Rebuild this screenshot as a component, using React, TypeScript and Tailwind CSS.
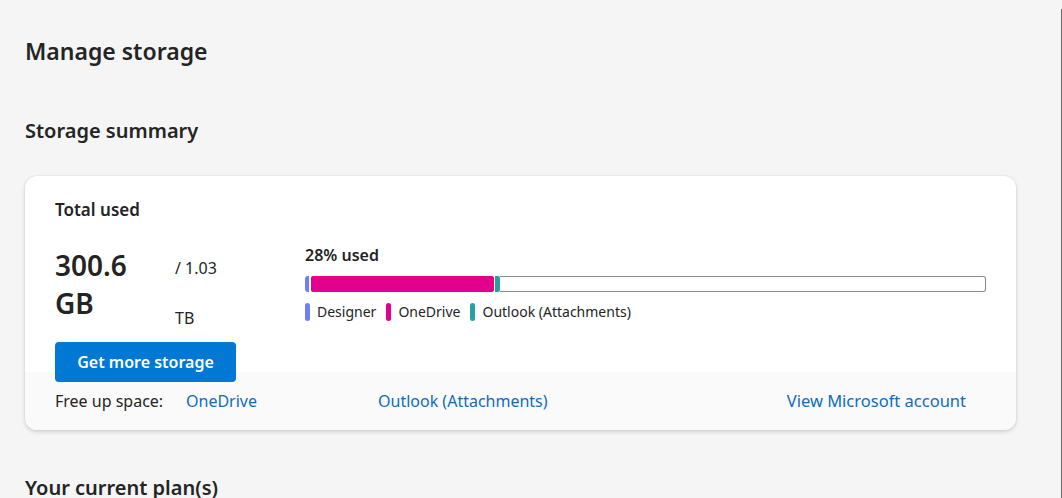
const SEGMENTS: { name: string; color: string }[] = [
  { name: "Designer", color: "bg-[#6f80f0]" },
  { name: "OneDrive", color: "bg-[#e3008c]" },
  { name: "Outlook (Attachments)", color: "bg-[#2b9fa0]" },
];

export default function App() {
  return (
    <div
      className="flex min-h-screen bg-[#f5f5f5] text-[#242424]"
      style={{ fontFamily: '"Segoe UI", "Noto Sans", sans-serif' }}
    >
      <main className="w-[1061px] pl-[25px] pr-[45px]">
        <h1 className="pt-[35px] text-[23px] leading-[32px] font-semibold">Manage storage</h1>
        <h2 className="mt-[50px] text-[20px] leading-[28px] font-semibold">Storage summary</h2>

        <section className="mt-[31px] rounded-xl bg-white overflow-hidden shadow-[0_2px_4px_rgba(0,0,0,0.14),0_0_2px_rgba(0,0,0,0.12)]">
          <div className="px-[30px] pt-[22px]">
            <p className="text-[17px] leading-[24px] font-semibold">Total used</p>

            <div className="mt-[21px] flex items-start h-[79px]">
              <div className="w-[120px] pt-[3px]">
                <p className="w-[90px] text-[28px] leading-[38px] font-semibold">300.6 GB</p>
              </div>
              <div className="w-[130px] text-[16px] leading-[50px]">
                / 1.03
                <br />
                TB
              </div>
              <div className="w-[681px] pt-[1px]">
                <p className="text-[16px] leading-[22px] font-semibold">28% used</p>
                <div className="mt-[10px] flex h-[16px] gap-[2px]">
                  <div className="w-[4px] rounded-l-[3px] bg-[#6f80f0]" />
                  <div className="w-[183px] rounded-[2px] bg-[#e3008c]" />
                  <div className="w-[5px] rounded-r-[2px] bg-[#2b9fa0] -ml-[1px]" />
                  <div className="flex-1 -ml-[2px] border border-l-0 border-[#8a8a8a] rounded-r-[3px]" />
                </div>
                <div className="mt-[10px] flex items-center text-[14px] leading-[20px]">
                  {SEGMENTS.map((s) => (
                    <div key={s.name} className="flex items-center mr-[10px]">
                      <span className={`w-[5px] h-[18px] rounded-full ${s.color}`} />
                      <span className="ml-[7px]">{s.name}</span>
                    </div>
                  ))}
                </div>
              </div>
            </div>

            <button className="relative z-10 block mt-[20px] -mb-[10px] h-[40px] w-[181px] rounded-[4px] bg-[#0078d4] text-white text-[16px] font-semibold">
              Get more storage
            </button>
          </div>

          <div className="h-[58px] bg-[#fafafa] px-[30px] flex items-center text-[16px]">
            <span className="w-[131px]">Free up space:</span>
            <a className="w-[192px] text-[#0f6cbd]">OneDrive</a>
            <a className="text-[#0f6cbd]">Outlook (Attachments)</a>
            <a className="ml-auto pr-[20px] text-[16.5px] text-[#0f6cbd]">View Microsoft account</a>
          </div>
        </section>

        <h2 className="mt-[44px] text-[20px] leading-[28px] font-semibold">Your current plan(s)</h2>
      </main>
      <div className="w-px mt-[9px] bg-[#6b6b6b]" />
    </div>
  );
}
